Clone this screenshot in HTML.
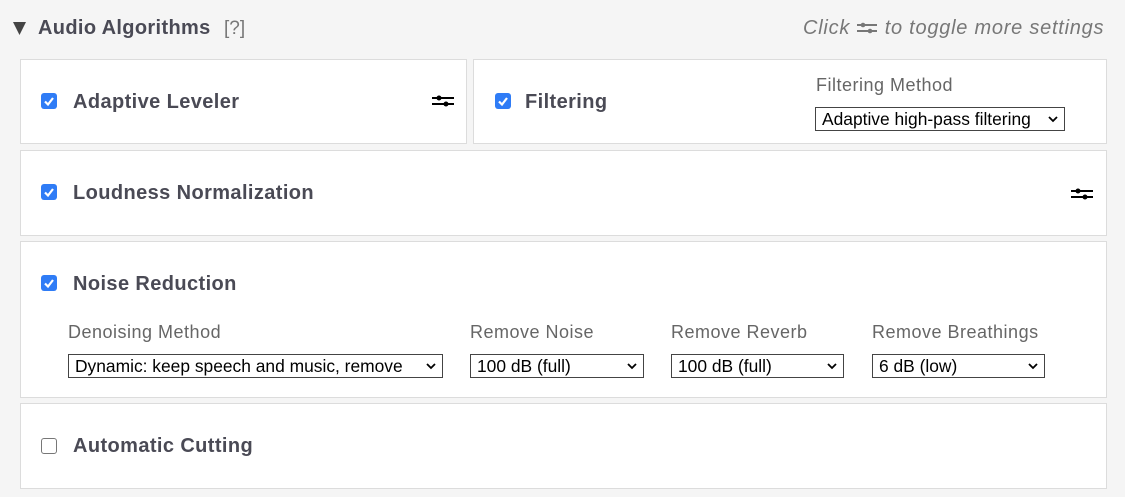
<!DOCTYPE html><html><head><style>
body{margin:0;width:1125px;height:497px;background:#f5f5f5;font-family:"Liberation Sans",sans-serif;position:relative;overflow:hidden}
.a{position:absolute}
.box{position:absolute;background:#fff;border:1px solid #dcdcdc;box-sizing:border-box}
.t{position:absolute;font-weight:bold;font-size:20px;letter-spacing:0.4px;color:#4a4a55;line-height:22px}
.cb{position:absolute;width:16px;height:16px;border-radius:3px;background:#2f7cf6;box-sizing:border-box}
.cb svg{position:absolute;left:2px;top:2px}
.cb.off{background:#fff;border:1.5px solid #777}
.lbl{position:absolute;font-size:18px;letter-spacing:0.5px;color:#666;line-height:20px}
.sel{position:absolute;height:24px;border:1px solid #444;box-sizing:border-box;background:#fff;font-size:17.4px;color:#000;line-height:22px;padding-left:6px;white-space:nowrap;overflow:hidden}
.sel svg{position:absolute;right:6px;top:8px}
</style></head><body>
<svg class="a" style="left:13px;top:22px" width="13" height="13"><path d="M0 0H13L6.5 13Z" fill="#444"/></svg>
<div class="a" style="left:38px;top:17px;font-size:20px;letter-spacing:0.35px;font-weight:bold;color:#4a4a55">Audio Algorithms</div>
<div class="a" style="left:224px;top:18px;font-size:19px;color:#777">[?]</div>
<div class="a" style="left:803px;top:17px;font-size:20px;letter-spacing:0.75px;font-style:italic;color:#777;white-space:nowrap">Click <svg width="22" height="14" viewBox="0 0 22 14" style="vertical-align:-1px"><path d="M1 4H21M1 10H21" stroke="#777" stroke-width="2"/><circle cx="7" cy="4" r="2.3" fill="#777"/><circle cx="14" cy="10" r="2.3" fill="#777"/></svg> to toggle more settings</div>

<div class="box" style="left:20px;top:59px;width:447px;height:85px"></div>
<div class="box" style="left:473px;top:59px;width:634px;height:85px"></div>
<div class="box" style="left:20px;top:150px;width:1087px;height:86px"></div>
<div class="box" style="left:20px;top:241px;width:1087px;height:157px"></div>
<div class="box" style="left:20px;top:403px;width:1087px;height:86px"></div>

<div class="cb" style="left:41px;top:93px"><svg width="12" height="12"><path d="M2 6.5L5 9.5L10 3" stroke="#fff" stroke-width="2.2" fill="none"/></svg></div>
<div class="t" style="left:73px;top:91px">Adaptive Leveler</div>
<svg class="a" style="left:432px;top:94px" width="22" height="14"><path d="M0 4H22M0 10H22" stroke="#000" stroke-width="2"/><circle cx="7" cy="4" r="2.5" fill="#000"/><circle cx="14" cy="10" r="2.5" fill="#000"/></svg>

<div class="cb" style="left:495px;top:93px"><svg width="12" height="12"><path d="M2 6.5L5 9.5L10 3" stroke="#fff" stroke-width="2.2" fill="none"/></svg></div>
<div class="t" style="left:525px;top:91px">Filtering</div>
<div class="lbl" style="left:816px;top:75px">Filtering Method</div>
<div class="sel" style="left:815px;top:107px;width:250px">Adaptive high-pass filtering<svg width="10" height="7"><path d="M1 1L5 5L9 1" stroke="#000" stroke-width="1.8" fill="none"/></svg></div>

<div class="cb" style="left:41px;top:184px"><svg width="12" height="12"><path d="M2 6.5L5 9.5L10 3" stroke="#fff" stroke-width="2.2" fill="none"/></svg></div>
<div class="t" style="left:73px;top:182px">Loudness Normalization</div>
<svg class="a" style="left:1071px;top:187px" width="22" height="14"><path d="M0 4H22M0 10H22" stroke="#000" stroke-width="2"/><circle cx="7" cy="4" r="2.5" fill="#000"/><circle cx="14" cy="10" r="2.5" fill="#000"/></svg>

<div class="cb" style="left:41px;top:275px"><svg width="12" height="12"><path d="M2 6.5L5 9.5L10 3" stroke="#fff" stroke-width="2.2" fill="none"/></svg></div>
<div class="t" style="left:73px;top:273px">Noise Reduction</div>
<div class="lbl" style="left:68px;top:322px">Denoising Method</div>
<div class="lbl" style="left:470px;top:322px">Remove Noise</div>
<div class="lbl" style="left:671px;top:322px">Remove Reverb</div>
<div class="lbl" style="left:872px;top:322px">Remove Breathings</div>
<div class="sel" style="left:68px;top:354px;width:375px">Dynamic: keep speech and music, remove<svg width="10" height="7"><path d="M1 1L5 5L9 1" stroke="#000" stroke-width="1.8" fill="none"/></svg></div>
<div class="sel" style="left:470px;top:354px;width:174px">100 dB (full)<svg width="10" height="7"><path d="M1 1L5 5L9 1" stroke="#000" stroke-width="1.8" fill="none"/></svg></div>
<div class="sel" style="left:671px;top:354px;width:173px">100 dB (full)<svg width="10" height="7"><path d="M1 1L5 5L9 1" stroke="#000" stroke-width="1.8" fill="none"/></svg></div>
<div class="sel" style="left:872px;top:354px;width:173px">6 dB (low)<svg width="10" height="7"><path d="M1 1L5 5L9 1" stroke="#000" stroke-width="1.8" fill="none"/></svg></div>

<div class="cb off" style="left:41px;top:438px"></div>
<div class="t" style="left:73px;top:435px">Automatic Cutting</div>
</body></html>
